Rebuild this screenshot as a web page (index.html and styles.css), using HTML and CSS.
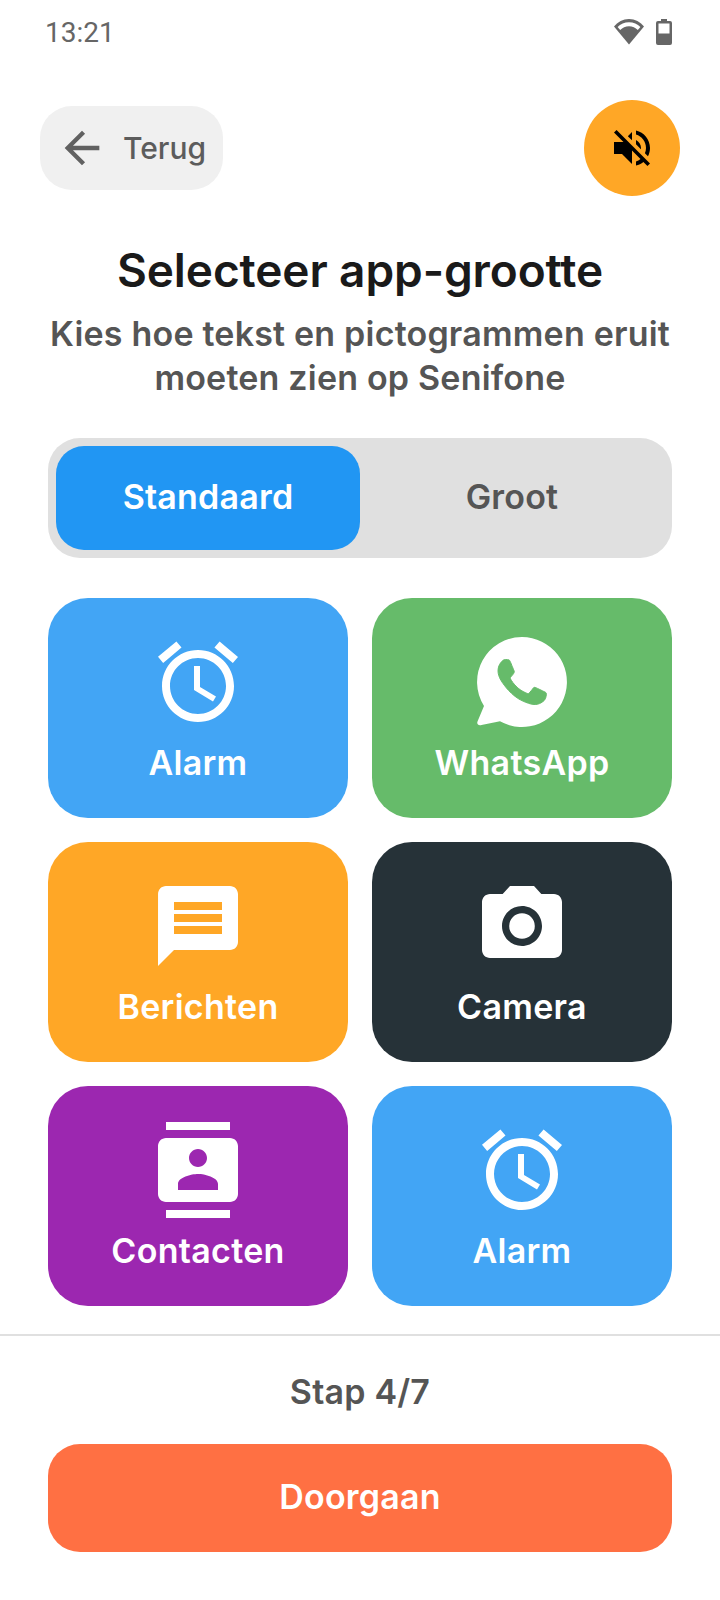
FILE: index.html
```html
<!DOCTYPE html>
<html lang="nl">
<head>
  <meta charset="UTF-8">
  <title>Selecteer app-grootte</title>
  <link rel="stylesheet" href="styles.css">
</head>
<body>

<div class="status">
  <span class="time">13:21</span>
  <div class="status-icons">
    <svg width="30" height="26" viewBox="0 0 30 26">
      <path fill="#666" d="M15 25.5 0 7.6C3.6 3 9 0 15 0s11.400 3 15 7.600z"/>
      <path fill="#fff" d="M15 3.200c4.500 0 8.500 1.800 11.400 4.800l-2.600 3C21.500 8.700 18.400 7.300 15 7.300S8.500 8.700 6.200 11l-2.600-3C6.500 5 10.500 3.200 15 3.200z"/>
    </svg>
    <svg width="16" height="26" viewBox="0 0 16 26">
      <path fill="#666" d="M5 0h6v2h3a2 2 0 0 1 2 2v20a2 2 0 0 1-2 2H2a2 2 0 0 1-2-2V4a2 2 0 0 1 2-2h3z"/>
      <rect fill="#fff" x="2.500" y="4.500" width="11" height="10"/>
    </svg>
  </div>
</div>

<div class="topbar">
  <div class="back">
    <svg class="back-arrow" viewBox="0 0 24 24"><path d="M20 11H7.830l5.590-5.590L12 4l-8 8 8 8 1.410-1.410L7.830 13H20v-2z"/></svg>
    <span>Terug</span>
  </div>
  <div class="mute">
    <svg width="48" height="48" viewBox="0 0 24 24"><path d="M16.500 12c0-1.770-1.020-3.290-2.500-4.030v2.210l2.450 2.450c.03-.2.05-.41.05-.63zm2.500 0c0 .94-.2 1.820-.54 2.640l1.510 1.510C20.630 14.910 21 13.500 21 12c0-4.280-2.990-7.860-7-8.770v2.060c2.890.86 5 3.540 5 6.710zM4.270 3L3 4.270 7.730 9H3v6h4l5 5v-6.730l4.250 4.250c-.67.52-1.420.93-2.250 1.180v2.060c1.380-.31 2.630-.95 3.690-1.810L19.730 21 21 19.730l-9-9L4.270 3zM12 4L9.910 6.090 12 8.180V4z"/></svg>
  </div>
</div>

<h1>Selecteer app-grootte</h1>
<p class="sub">Kies hoe tekst en pictogrammen eruit<br>moeten zien op Senifone</p>

<div class="segment">
  <div class="seg-item active">Standaard</div>
  <div class="seg-item">Groot</div>
</div>

<div class="tiles">
  <div class="tile blue">
    <svg class="icon" viewBox="0 0 24 24"><path d="M22 5.720l-4.600-3.860-1.290 1.530 4.600 3.860L22 5.720zM7.880 3.390L6.600 1.860 2 5.710l1.290 1.530 4.590-3.850zM12.500 8H11v6l4.750 2.850.75-1.230-4-2.370V8zM12 4c-4.970 0-9 4.030-9 9s4.030 9 9 9 9-4.030 9-9-4.030-9-9-9zm0 16c-3.870 0-7-3.130-7-7s3.130-7 7-7 7 3.130 7 7-3.130 7-7 7z"/></svg>
    <span class="label">Alarm</span>
  </div>
  <div class="tile green">
    <svg class="icon" viewBox="0 0 96 96">
      <path d="M48 3a45 45 0 1 1-22 84.300L7.500 91c-3 1-5-1-4-3.500L10 72A45 45 0 0 1 48 3z"/>
      <path class="phone" transform="scale(4)" d="M17.472 14.382c-.297-.149-1.758-.867-2.030-.967-.273-.099-.471-.148-.67.15-.197.297-.767.966-.94 1.164-.173.199-.347.223-.644.075-.297-.15-1.255-.463-2.390-1.475-.883-.788-1.480-1.761-1.653-2.059-.173-.297-.018-.458.13-.606.134-.133.298-.347.446-.52.149-.174.198-.298.298-.497.099-.198.05-.371-.025-.52-.075-.149-.669-1.612-.916-2.207-.242-.579-.487-.5-.669-.51-.173-.008-.371-.01-.57-.01-.198 0-.52.074-.792.372-.272.297-1.040 1.016-1.040 2.479 0 1.462 1.065 2.875 1.213 3.074.149.198 2.096 3.200 5.077 4.487.709.306 1.262.489 1.694.625.712.227 1.360.195 1.871.118.571-.085 1.758-.719 2.006-1.413.248-.694.248-1.289.173-1.413-.074-.124-.272-.198-.57-.347z"/>
    </svg>
    <span class="label">WhatsApp</span>
  </div>
  <div class="tile orange">
    <svg class="icon" viewBox="0 0 24 24"><path d="M20 2H4c-1.100 0-1.990.9-1.990 2L2 22l4-4h14c1.100 0 2-.9 2-2V4c0-1.100-.9-2-2-2zm-2 12H6v-2h12v2zm0-3H6V9h12v2zm0-3H6V6h12v2z"/></svg>
    <span class="label">Berichten</span>
  </div>
  <div class="tile dark">
    <svg class="icon" viewBox="0 0 24 24"><path d="M12 15.200a3.200 3.200 0 1 0 0-6.400 3.200 3.200 0 0 0 0 6.400z"/><path d="M9 2L7.170 4H4c-1.100 0-2 .9-2 2v12c0 1.100.9 2 2 2h16c1.100 0 2-.9 2-2V6c0-1.100-.9-2-2-2h-3.170L15 2H9zm3 15c-2.760 0-5-2.240-5-5s2.240-5 5-5 5 2.240 5 5-2.240 5-5 5z"/></svg>
    <span class="label">Camera</span>
  </div>
  <div class="tile purple">
    <svg class="icon" viewBox="0 0 24 24"><path d="M20 0H4v2h16V0zM4 24h16v-2H4v2zM20 4H4c-1.100 0-2 .9-2 2v12c0 1.100.9 2 2 2h16c1.100 0 2-.9 2-2V6c0-1.100-.9-2-2-2zm-8 2.750c1.240 0 2.250 1.010 2.250 2.250s-1.010 2.250-2.250 2.250S9.750 10.240 9.750 9 10.760 6.750 12 6.750zM17 17H7v-1.500c0-1.670 3.330-2.500 5-2.500s5 .83 5 2.500V17z"/></svg>
    <span class="label">Contacten</span>
  </div>
  <div class="tile blue">
    <svg class="icon" viewBox="0 0 24 24"><path d="M22 5.720l-4.600-3.860-1.290 1.530 4.600 3.860L22 5.720zM7.880 3.390L6.600 1.860 2 5.710l1.290 1.530 4.590-3.850zM12.500 8H11v6l4.750 2.850.75-1.230-4-2.370V8zM12 4c-4.970 0-9 4.030-9 9s4.030 9 9 9 9-4.030 9-9-4.030-9-9-9zm0 16c-3.870 0-7-3.130-7-7s3.130-7 7-7 7 3.130 7 7-3.130 7-7 7z"/></svg>
    <span class="label">Alarm</span>
  </div>
</div>

<div class="footer">
  <div class="step">Stap 4/7</div>
  <div class="next">Doorgaan</div>
</div>

</body>
</html>
```

FILE: styles.css
```css
body { margin: 0; width: 720px; height: 1600px; background: #fff; font-family: Inter, sans-serif; color: #555; overflow: hidden; }

.status { height: 62px; padding: 2px 48px 0 45px; box-sizing: border-box; display: flex; justify-content: space-between; align-items: center; }
.time { font-family: Roboto, sans-serif; font-size: 28px; color: #666; }
.status-icons { display: flex; gap: 12px; }

.topbar { margin-top: 38px; padding: 0 40px; height: 96px; display: flex; justify-content: space-between; align-items: center; }
.back { width: 183px; height: 84px; box-sizing: border-box; padding-left: 16px; background: #f0f0f0; border-radius: 32px; display: flex; align-items: center; gap: 15px; font-size: 30px; font-weight: 500; color: #5c5c5c; }
.back-arrow { width: 52px; height: 52px; fill: #616161; }
.mute { width: 96px; height: 96px; border-radius: 50%; background: #ffa726; display: flex; align-items: center; justify-content: center; }

h1 { margin: 44px 0 0; font-size: 46px; line-height: 60px; font-weight: 600; letter-spacing: -0.1px; color: #1a1a1a; text-align: center; }
.sub { margin: 12px 0 0; font-size: 34px; line-height: 44px; font-weight: 600; letter-spacing: 0.2px; text-align: center; color: #555; }

.segment { margin: 38px 48px 0; height: 120px; box-sizing: border-box; padding: 8px; background: #e0e0e0; border-radius: 32px; display: grid; grid-template-columns: 1fr 1fr; }
.seg-item { padding-bottom: 3px; border-radius: 28px; display: flex; align-items: center; justify-content: center; font-size: 34px; font-weight: 600; letter-spacing: 0.2px; color: #555; }
.seg-item.active { background: #2196f3; color: #fff; }

.tiles { margin: 40px 48px 0; display: grid; grid-template-columns: 300px 300px; grid-auto-rows: 220px; gap: 24px; }
.tile { border-radius: 40px; padding-top: 36px; box-sizing: border-box; display: flex; flex-direction: column; align-items: center; color: #fff; }
.icon { width: 96px; height: 96px; fill: #fff; }
.label { margin-top: 11px; font-size: 34px; line-height: 44px; font-weight: 600; letter-spacing: 0.3px; }
.blue { background: #42a5f5; }
.green { background: #66bb6a; }
.green .phone { fill: #66bb6a; stroke: #66bb6a; stroke-width: 0.25; }
.orange { background: #ffa726; }
.dark { background: #263238; }
.purple { background: #9c27b0; }

.footer { margin-top: 28px; padding: 0 48px; border-top: 2px solid #e0e0e0; }
.step { margin-top: 34px; font-size: 34px; line-height: 44px; font-weight: 600; letter-spacing: 0.2px; text-align: center; color: #555; }
.next { margin-top: 30px; padding-bottom: 3px; box-sizing: border-box; height: 108px; background: #ff7043; border-radius: 32px; display: flex; align-items: center; justify-content: center; font-size: 34px; font-weight: 600; letter-spacing: 0.2px; color: #fff; }
```
